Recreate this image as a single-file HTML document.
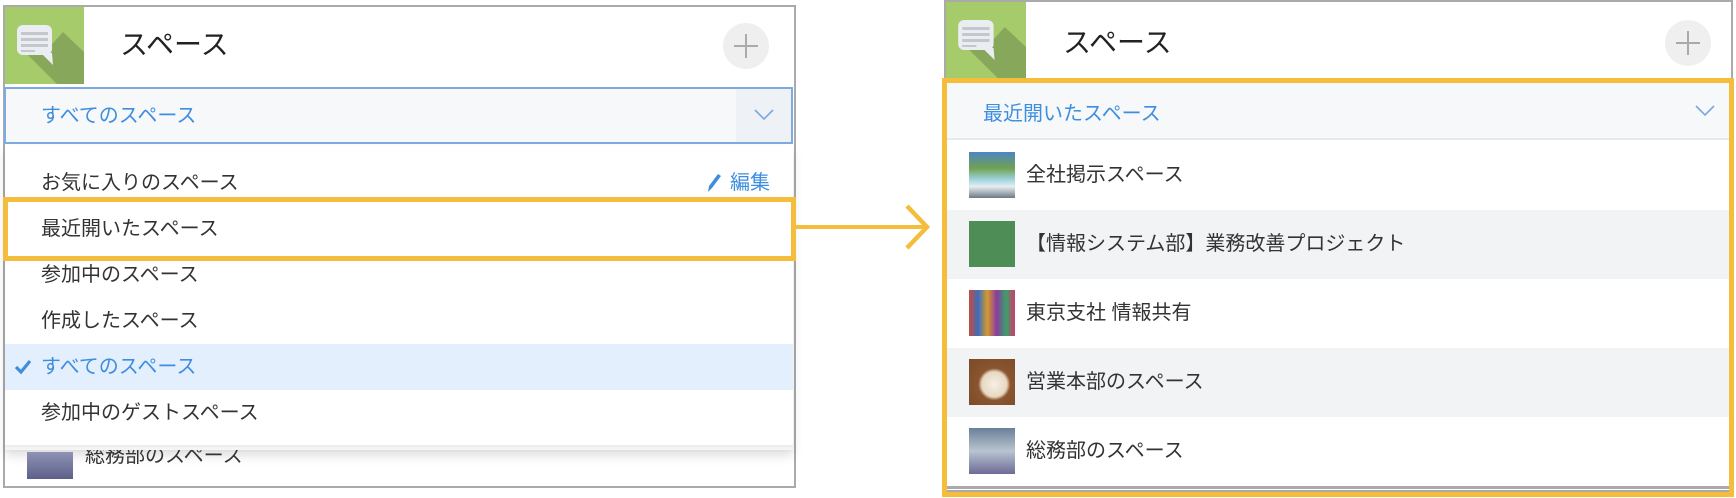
<!DOCTYPE html>
<html><head><meta charset="utf-8"><style>
*{margin:0;padding:0;box-sizing:border-box}
body{width:1736px;height:498px;background:#fff;position:relative;overflow:hidden;font-family:"Liberation Sans","Noto Sans CJK JP",sans-serif;color:#333}
.a{position:absolute}
.t{position:absolute;font-size:20px;line-height:24px;white-space:nowrap}
.plus{position:absolute;width:46px;height:46px;border-radius:50%;background:#efefef}
.plus:before,.plus:after{content:"";position:absolute;background:#aaa;left:50%;top:50%}
.plus:before{width:24px;height:2px;margin:-1px 0 0 -12px}
.plus:after{width:2px;height:24px;margin:-12px 0 0 -1px}
</style></head><body>

<!-- LEFT PANEL -->
<div class="a" style="left:3px;top:5px;width:793px;height:483px;border:2px solid #aaa"></div>
<svg class="a" style="left:5px;top:7px" width="79" height="77" viewBox="0 0 79 77">
<rect width="79" height="77" fill="#a6cb6b"/>
<polygon points="40,45 58,25 79,45 79,77 52,77 20,45" fill="#87a85a"/>
<rect x="12" y="18" width="35" height="30" rx="6" fill="#eaedf1"/>
<polygon points="36,46 47,46 48,58" fill="#eaedf1"/>
<rect x="16" y="25" width="27" height="3" fill="#c4c8cd"/><rect x="16" y="31" width="27" height="3" fill="#c4c8cd"/><rect x="16" y="37" width="27" height="3" fill="#c4c8cd"/><rect x="16" y="43" width="14" height="2" fill="#c4c8cd"/>
</svg>
<div class="t" style="left:120px;top:29px;font-size:28px;line-height:32px;color:#222">スペース</div>
<div class="plus" style="left:723px;top:23px"></div>

<div class="a" style="left:4px;top:87px;width:789px;height:57px;border:2px solid #7eaadf;background:#f6f8fa"></div>
<div class="a" style="left:736px;top:89px;width:55px;height:53px;background:#eef1f5"></div>
<svg class="a" style="left:753px;top:108px" width="22" height="14"><polyline points="2,2 11,11 20,2" fill="none" stroke="#7aa9dc" stroke-width="1.6"/></svg>
<div class="t" style="left:41px;top:104px;color:#3e8ee0">すべてのスペース</div>

<div class="a" style="left:5px;top:146px;width:788px;height:304px;background:#fff;box-shadow:0 6px 10px rgba(0,0,0,.12)"></div>
<div class="a" style="left:27px;top:452px;width:46px;height:27px;background:linear-gradient(#8f93b5,#5d5f8a)"></div>
<div class="t" style="left:85px;top:444px;color:#333">総務部のスペース</div>
<div class="a" style="left:5px;top:146px;width:788px;height:304px;background:#fff"></div>
<div class="a" style="left:5px;top:445px;width:788px;height:8px;background:linear-gradient(rgba(0,0,0,.08),rgba(0,0,0,0))"></div>

<div class="t" style="left:41px;top:171px">お気に入りのスペース</div>
<svg class="a" style="left:705px;top:172px" width="18" height="22"><path d="M3 20 L4 14 L13 2 L16 4 L7 16 Z" fill="#3e8ee0"/></svg>
<div class="t" style="left:730px;top:171px;color:#3e8ee0">編集</div>
<div class="t" style="left:41px;top:217px">最近開いたスペース</div>
<div class="t" style="left:41px;top:263px">参加中のスペース</div>
<div class="t" style="left:41px;top:309px">作成したスペース</div>
<div class="a" style="left:5px;top:344px;width:788px;height:46px;background:#e3effc"></div>
<svg class="a" style="left:14px;top:358px" width="18" height="18"><path d="M2 9 L7 14 L16 3" fill="none" stroke="#3e8ee0" stroke-width="3.2"/></svg>
<div class="t" style="left:41px;top:355px;color:#3e8ee0">すべてのスペース</div>
<div class="t" style="left:41px;top:401px">参加中のゲストスペース</div>

<div class="a" style="left:3px;top:197px;width:793px;height:64px;border:5px solid #f5bd3c"></div>
<div class="a" style="left:796px;top:225px;width:128px;height:4px;background:#f5bd3c"></div>
<svg class="a" style="left:903px;top:203px" width="30" height="48"><polyline points="4,3 24,24 4,45" fill="none" stroke="#f5bd3c" stroke-width="4.5"/></svg>

<!-- RIGHT PANEL -->
<div class="a" style="left:944px;top:0;width:789px;height:492px;border:2px solid #aaa"></div>
<svg class="a" style="left:946px;top:2px" width="80" height="77" viewBox="0 0 79 77" preserveAspectRatio="none">
<rect width="79" height="77" fill="#a6cb6b"/>
<polygon points="40,45 58,25 79,45 79,77 52,77 20,45" fill="#87a85a"/>
<rect x="12" y="18" width="35" height="30" rx="6" fill="#eaedf1"/>
<polygon points="36,46 47,46 48,58" fill="#eaedf1"/>
<rect x="16" y="25" width="27" height="3" fill="#c4c8cd"/><rect x="16" y="31" width="27" height="3" fill="#c4c8cd"/><rect x="16" y="37" width="27" height="3" fill="#c4c8cd"/><rect x="16" y="43" width="14" height="2" fill="#c4c8cd"/>
</svg>
<div class="t" style="left:1063px;top:27px;font-size:28px;line-height:32px;color:#222">スペース</div>
<div class="plus" style="left:1665px;top:20px"></div>

<div class="a" style="left:945px;top:83px;width:787px;height:57px;background:#f6f8fa;border-bottom:2px solid #e6e9ed"></div>
<div class="t" style="left:983px;top:102px;color:#3e8ee0">最近開いたスペース</div>
<svg class="a" style="left:1694px;top:104px" width="22" height="14"><polyline points="2,2 11,11 20,2" fill="none" stroke="#7aa9dc" stroke-width="1.6"/></svg>

<div class="a" style="left:945px;top:210px;width:787px;height:69px;background:#f2f3f5"></div>
<div class="a" style="left:945px;top:348px;width:787px;height:69px;background:#f2f3f5"></div>
<div class="a" style="left:945px;top:486px;width:787px;height:3px;background:#aaa"></div>

<div class="a" style="left:969px;top:152px;width:46px;height:46px;background:linear-gradient(#4d86c4 0%,#6fa050 35%,#9fd4e0 60%,#e8eef0 75%,#6b7a88 100%)"></div>
<div class="t" style="left:1026px;top:163px">全社掲示スペース</div>
<div class="a" style="left:969px;top:221px;width:46px;height:46px;background:#4e8d55"></div>
<div class="t" style="left:1026px;top:232px">【情報システム部】業務改善プロジェクト</div>
<div class="a" style="left:969px;top:290px;width:46px;height:46px;background:linear-gradient(90deg,#c94a3a,#3a6ec0,#d69a2a,#8b3aa0,#3aa06a,#d03a6a)"></div>
<div class="t" style="left:1026px;top:301px">東京支社 情報共有</div>
<div class="a" style="left:969px;top:359px;width:46px;height:46px;background:radial-gradient(circle at 55% 55%,#f5f0e8 0,#e8d8c0 35%,#8a5530 45%,#7a4a28 100%)"></div>
<div class="t" style="left:1026px;top:370px">営業本部のスペース</div>
<div class="a" style="left:969px;top:428px;width:46px;height:46px;background:linear-gradient(#6a8098,#b8c4cf 50%,#6e6a98)"></div>
<div class="t" style="left:1026px;top:439px">総務部のスペース</div>

<div class="a" style="left:942px;top:78px;width:792px;height:419px;border:5px solid #f5bd3c"></div>
</body></html>
